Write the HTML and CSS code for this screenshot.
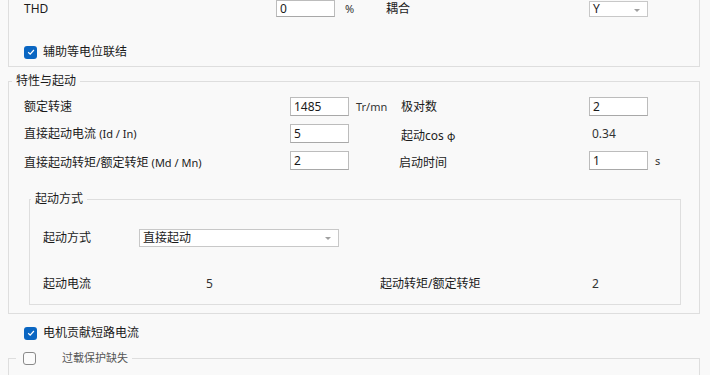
FILE: index.html
```html
<!DOCTYPE html>
<html lang="zh-CN">
<head>
    <meta charset="UTF-8">
    <meta name="viewport" content="width=device-width, initial-scale=1.0">
    <title>电机参数</title>
    <link rel="stylesheet" href="styles.css">
</head>
<body>
    <div class="panel">
        <div class="group group-top">
            <div class="row-top">
                <span class="lbl">THD</span>
                <input class="field" type="text" value="0">
                <span class="unit">%</span>
                <span class="lbl">耦合</span>
                <div class="select small">Y<span class="arrow"></span></div>
            </div>
            <div class="check">
                <span class="box on"><svg viewBox="0 0 12 12" width="12" height="12"><path d="M3.2 6.2 L5.2 8.1 L8.9 4" fill="none" stroke="#fff" stroke-width="1.2"/></svg></span>
                辅助等电位联结
            </div>
        </div>

        <fieldset class="group">
            <legend>特性与起动</legend>
            <div class="grid-main">
                <span class="lbl">额定转速</span>
                <input class="field" type="text" value="1485">
                <span class="unit">Tr/mn</span>
                <span class="lbl">极对数</span>
                <input class="field" type="text" value="2">

                <span class="lbl">直接起动电流 <small>(Id / In)</small></span>
                <input class="field" type="text" value="5">
                <span class="unit"></span>
                <span class="lbl low">起动cos <span class="phi">φ</span></span>
                <span class="val">0.34</span>

                <span class="lbl low">直接起动转矩/额定转矩 <small>(Md / Mn)</small></span>
                <input class="field" type="text" value="2">
                <span class="unit"></span>
                <span class="lbl low shift">启动时间</span>
                <div class="with-unit">
                    <input class="field" type="text" value="1">
                    <span class="unit">s</span>
                </div>
            </div>

            <fieldset class="group inner">
                <legend>起动方式</legend>
                <div class="mode-row">
                    <span class="lbl">起动方式</span>
                    <div class="select">直接起动<span class="arrow"></span></div>
                </div>
                <div class="result-row">
                    <span class="lbl">起动电流</span>
                    <span class="val">5</span>
                    <span class="lbl">起动转矩/额定转矩</span>
                    <span class="val">2</span>
                </div>
            </fieldset>
        </fieldset>

        <div class="check check-short">
            <span class="box on"><svg viewBox="0 0 12 12" width="12" height="12"><path d="M3.2 6.2 L5.2 8.1 L8.9 4" fill="none" stroke="#fff" stroke-width="1.2"/></svg></span>
            电机贡献短路电流
        </div>

        <fieldset class="group group-bottom">
            <legend><span class="box"></span><span class="muted">过载保护缺失</span></legend>
        </fieldset>
    </div>
</body>
</html>
```

FILE: styles.css
```css
body {
    margin: 0;
    background-color: #f9f9f9;
    color: #1b1b1b;
    font-family: "Noto Sans", "Noto Sans CJK SC", sans-serif;
    font-size: 12px;
    line-height: 16px;
    overflow: hidden;
}
.panel {
    padding: 0 10px 0 8px;
}
.group {
    border: 1px solid #dedede;
    margin: 0;
    min-width: 0;
}
.group legend {
    margin-left: -12px;
    padding: 0 4px;
    line-height: 16px;
}
.group-top {
    border-top: none;
    padding: 0 15px 7px;
}
.row-top {
    display: grid;
    grid-template-columns: 252px 59px 51px 203px 59px;
    align-items: center;
    height: 17px;
}
.field {
    box-sizing: border-box;
    width: 59px;
    height: 19px;
    margin: 0;
    padding: 0 3px;
    border: 1px solid #bcbcbc;
    border-bottom-color: #a8a8a8;
    background: #fff;
    font-family: inherit;
    font-size: 12px;
    color: #1b1b1b;
    outline: none;
}
.row-top .field {
    height: 17px;
}
.unit {
    padding-left: 10px;
    font-size: 11px;
    color: #333;
}
small {
    font-size: 11px;
}
.phi {
    font-family: "Noto Sans CJK SC", sans-serif;
    font-size: 11px;
}
.select {
    box-sizing: border-box;
    position: relative;
    height: 18px;
    padding: 0 3px;
    border: 1px solid #c8c8c8;
    background: #fff;
    line-height: 16px;
}
.select.small {
    height: 16px;
    line-height: 14px;
}
.arrow {
    position: absolute;
    right: 7px;
    top: 7px;
    border-left: 3px solid transparent;
    border-right: 3px solid transparent;
    border-top: 3px solid #a0a0a0;
}
.check {
    display: flex;
    align-items: center;
    gap: 6px;
    height: 14px;
    margin-top: 28px;
}
.box {
    box-sizing: border-box;
    display: inline-flex;
    width: 13px;
    height: 13px;
    border: 1px solid #8a8a8a;
    border-radius: 3px;
    background: #fbfbfb;
}
.box.on {
    border: none;
    background: #0a66c2;
}
.box svg {
    display: block;
    margin: 0.5px;
}

.grid-main {
    display: grid;
    grid-template-columns: 266px 58px 53px 188px 59px;
    grid-auto-rows: 19px;
    row-gap: 8px;
    align-items: center;
    padding-top: 8px;
}
.grid-main .unit {
    padding-left: 8px;
}
fieldset.group {
    padding: 0 15px 8px;
}
fieldset.group:not(.inner):not(.group-bottom) {
    margin-top: 6px;
}
.low {
    position: relative;
    top: 2px;
}
.shift {
    margin-left: -2px;
}
.val {
    padding-left: 3px;
    color: #333;
}
.with-unit {
    display: flex;
    align-items: center;
}
.with-unit .unit {
    padding-left: 7px;
}

fieldset.inner {
    margin: 21px 3px 0 5px;
    padding: 22px 13px 12px;
}
.mode-row {
    display: grid;
    grid-template-columns: 96px 200px;
    align-items: center;
}
.result-row {
    display: grid;
    grid-template-columns: 163px 174px 212px auto;
    align-items: center;
    margin-top: 29px;
}
.result-row .val {
    padding-left: 0;
}

.check-short {
    margin: 12px 0 0 16px;
}
fieldset.group-bottom {
    margin-top: 10px;
    min-height: 40px;
}
.group-bottom legend {
    display: flex;
    align-items: center;
    margin-left: -8px;
    padding: 0 4px 0 7px;
}
.muted {
    margin-left: 26px;
    color: #555;
    font-size: 11px;
}
```
